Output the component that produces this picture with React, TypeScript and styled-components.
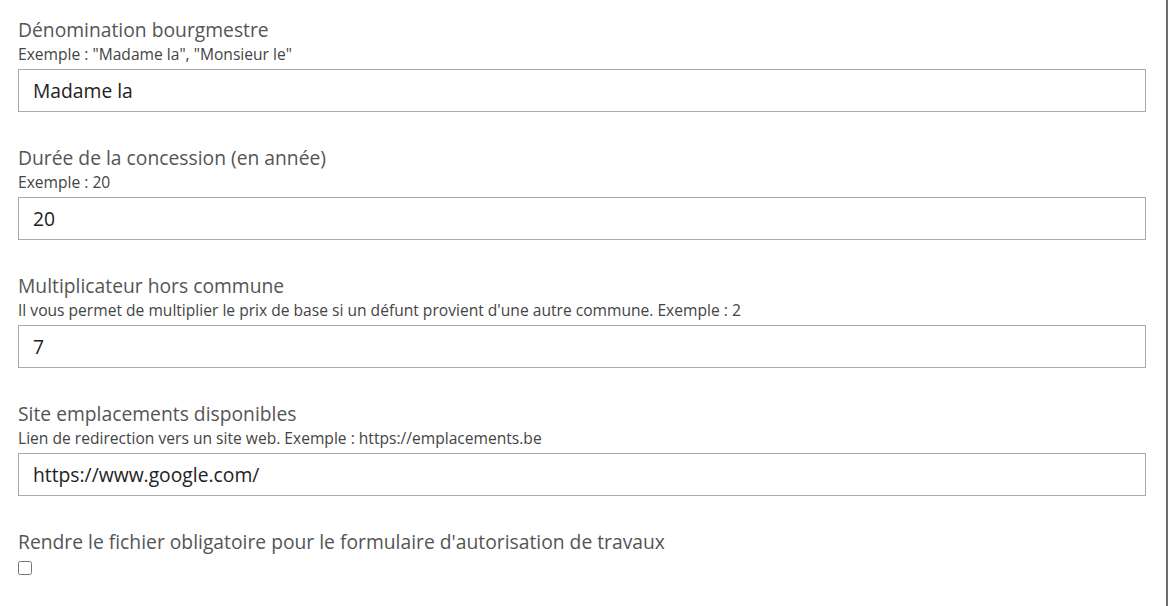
import React from "react";
import styled, { createGlobalStyle } from "styled-components";

const Global = createGlobalStyle`
  html, body { margin: 0; padding: 0; background: #fff; }
  body { font-family: "Open Sans", "Liberation Sans", sans-serif; }
`;

const Page = styled.div`
  display: flex;
  width: 1168px;
  height: 606px;
  overflow: hidden;
`;

const Content = styled.div`
  flex: 1;
  padding: 17px 20px 0 18px;
  display: flex;
  flex-direction: column;
  gap: 33px;
`;

const Edge = styled.div`
  width: 2px;
  background: #6c6c6c;
`;

const Field = styled.div`
  display: flex;
  flex-direction: column;
`;

const Label = styled.label`
  font-size: 19.3px;
  line-height: 26px;
  color: #555;
`;

const Help = styled.div`
  font-size: 15.6px;
  line-height: 22px;
  color: #444;
  margin-bottom: 4px;
`;

const Input = styled.input`
  box-sizing: border-box;
  width: 100%;
  height: 43px;
  border: 1px solid #a9a9a9;
  border-radius: 0;
  padding: 0 14px;
  font-family: "Open Sans", "Liberation Sans", sans-serif;
  font-size: 19.3px;
  color: #222;
  outline: none;
  background: #fff;
`;

const Check = styled.input`
  margin: 6px 0 0 0;
  width: 14px;
  height: 14px;
`;

const fields = [
  { label: "Dénomination bourgmestre", help: 'Exemple : "Madame la", "Monsieur le"', value: "Madame la" },
  { label: "Durée de la concession (en année)", help: "Exemple : 20", value: "20" },
  {
    label: "Multiplicateur hors commune",
    help: "Il vous permet de multiplier le prix de base si un défunt provient d'une autre commune. Exemple : 2",
    value: "7",
  },
  {
    label: "Site emplacements disponibles",
    help: "Lien de redirection vers un site web. Exemple : https://emplacements.be",
    value: "https://www.google.com/",
  },
];

export default function App() {
  return (
    <>
      <Global />
      <Page>
        <Content>
          {fields.map((f) => (
            <Field key={f.label}>
              <Label>{f.label}</Label>
              <Help>{f.help}</Help>
              <Input defaultValue={f.value} />
            </Field>
          ))}
          <Field>
            <Label>Rendre le fichier obligatoire pour le formulaire d'autorisation de travaux</Label>
            <div>
              <Check type="checkbox" />
            </div>
          </Field>
        </Content>
        <Edge />
      </Page>
    </>
  );
}
